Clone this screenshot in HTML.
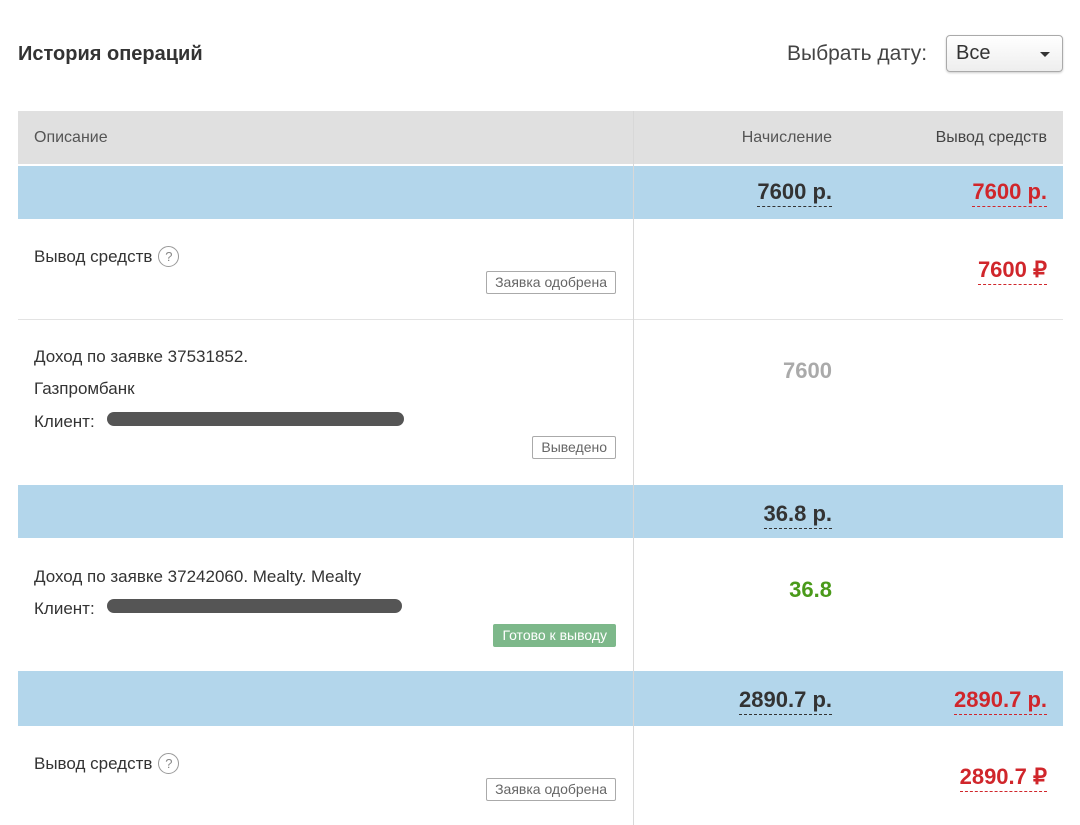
<!DOCTYPE html>
<html><head><meta charset="utf-8"><style>
body{margin:0;width:1080px;height:825px;background:#fff;font-family:"Liberation Sans",sans-serif;color:#333;position:relative;overflow:hidden}
.a{position:absolute;white-space:nowrap}
.h{position:absolute;left:18px;width:1045px}
.badge{position:absolute;right:464px;border:1px solid #aaa;border-radius:2px;font-size:14px;color:#666;padding:1px 8px;line-height:19px;box-sizing:border-box;height:23px}
.num{font-weight:bold;font-size:22px;border-bottom:1px dashed #333;line-height:24px;padding-bottom:2px}
.red{color:#d0262b;border-bottom-color:#d0262b}
.q{display:inline-block;width:21px;height:21px;border:1px solid #999;border-radius:50%;font-size:13px;text-align:center;line-height:20px;color:#888;box-sizing:border-box;vertical-align:1px;margin-left:6px}
.bar{position:absolute;height:14px;background:#555;border-radius:7px}
.t{font-size:17px}
</style></head><body>
<div class="a" style="left:18px;top:43px;font-size:20px;font-weight:bold;color:#333">История операций</div>
<div class="a" style="left:787px;top:42px;font-size:21px;color:#444">Выбрать дату:</div>
<div class="a" style="left:946px;top:35px;width:117px;height:37px;border:1px solid #aaa;border-radius:4px;box-sizing:border-box;background:linear-gradient(#fff,#eee);box-shadow:0 1px 2px rgba(0,0,0,.2)">
<span class="a" style="left:9px;top:6px;font-size:20px;color:#333">Все</span>
<span class="a" style="left:93px;top:16px;width:0;height:0;border-left:5px solid transparent;border-right:5px solid transparent;border-top:5px solid #333"></span></div>

<div class="h" style="top:111px;height:53px;background:#e0e0e0"></div>
<div class="h" style="top:166px;height:53px;background:#b3d6eb"></div>
<div class="h" style="top:319px;height:1px;background:#e3e3e3"></div>
<div class="h" style="top:485px;height:53px;background:#b3d6eb"></div>
<div class="h" style="top:671px;height:55px;background:#b3d6eb"></div>
<div class="a" style="left:633px;top:111px;width:1px;height:714px;background:#d8d8d8"></div>

<div class="a" style="left:34px;top:129px;font-size:16px;color:#555">Описание</div>
<div class="a" style="right:248px;top:129px;font-size:16px;color:#555">Начисление</div>
<div class="a" style="right:33px;top:129px;font-size:16px;color:#444">Вывод средств</div>

<div class="a num" style="right:248px;top:180px">7600 р.</div>
<div class="a num red" style="right:33px;top:180px">7600 р.</div>

<div class="a t" style="left:34px;top:246px">Вывод средств<span class="q">?</span></div>
<div class="badge" style="top:271px">Заявка одобрена</div>
<div class="a num red" style="right:33px;top:258px">7600 ₽</div>

<div class="a t" style="left:34px;top:347px">Доход по заявке 37531852.</div>
<div class="a t" style="left:34px;top:379px">Газпромбанк</div>
<div class="a t" style="left:34px;top:412px">Клиент:</div>
<div class="bar" style="left:107px;top:412px;width:297px"></div>
<div class="badge" style="top:436px">Выведено</div>
<div class="a" style="right:248px;top:358px;font-size:22px;font-weight:bold;color:#aaa">7600</div>

<div class="a num" style="right:248px;top:502px">36.8 р.</div>

<div class="a t" style="left:34px;top:567px">Доход по заявке 37242060. Mealty. Mealty</div>
<div class="a t" style="left:34px;top:599px">Клиент:</div>
<div class="bar" style="left:107px;top:599px;width:295px"></div>
<div class="badge" style="top:624px;background:#7db88a;border-color:#7db88a;color:#fff">Готово к выводу</div>
<div class="a" style="right:248px;top:577px;font-size:22px;font-weight:bold;color:#4a9a1a">36.8</div>

<div class="a num" style="right:248px;top:688px">2890.7 р.</div>
<div class="a num red" style="right:33px;top:688px">2890.7 р.</div>

<div class="a t" style="left:34px;top:753px">Вывод средств<span class="q">?</span></div>
<div class="badge" style="top:778px">Заявка одобрена</div>
<div class="a num red" style="right:33px;top:765px">2890.7 ₽</div>
</body></html>
